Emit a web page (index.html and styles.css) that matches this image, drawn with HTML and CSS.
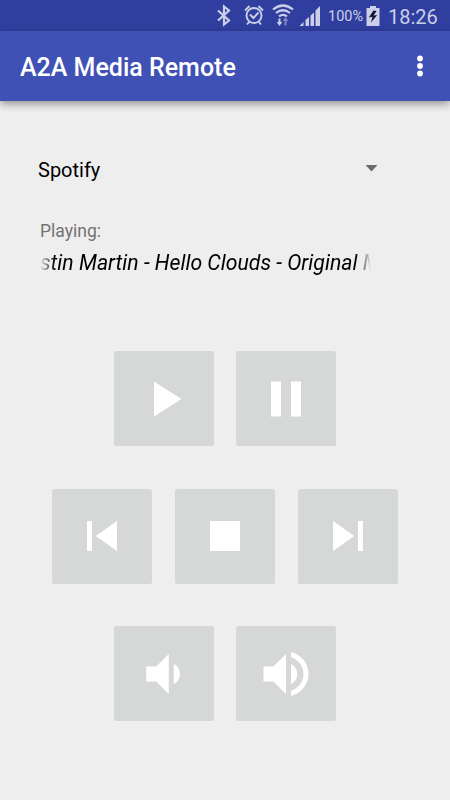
FILE: index.html
```html
<!DOCTYPE html>
<html lang="en">
<head>
<meta charset="utf-8">
<title>A2A Media Remote</title>
<link rel="stylesheet" href="styles.css">
</head>
<body>
<div class="status">
  <svg class="status-icons" width="108" height="30" viewBox="0 0 108 30">
    <path class="line bold" d="M1 10.500L12 20.500L7 24.500V6.500L12 10.500L1 20.500"/>
    <g class="line">
      <circle cx="37" cy="15.500" r="7.500"/>
      <path d="M33 14.500l3.500 3.500 5-5.500M28 10.500l4.500-4.500M46 10.500l-4.500-4.500M32.500 21.500l-2.500 3M41.500 21.500l2.500 3"/>
    </g>
    <g class="line bold">
      <path d="M56 9.500Q66 1.500 76 9.500M59 13Q66 7.500 73 13M62 16.300Q66 13.300 70 16.300"/>
    </g>
    <path class="fill" d="M61.500 18.500h2v3.500h1.800l-2.800 4-2.800-4h1.800z"/>
    <path class="dim" d="M67.500 25.500h2V21h1.800l-2.800-4-2.800 4h1.800z"/>
    <path class="fill" d="M82.500 26l4-4V26zM88.500 20l3.500-3v9h-3.500zM93.500 15.500l3.500-3V26h-3.500zM98.500 10.500l4.500-4.500V26h-4.500z"/>
  </svg>
  <span class="percent">100%</span>
  <svg class="battery" width="14" height="20" viewBox="0 0 14 20">
    <path class="fill" d="M.500 2H4V0h6v2h3.500v18H.500z"/>
    <path class="bolt" d="M7.500 4.500L2.800 11.500 6.500 10.800 5 16.500 11.200 9 7.500 9.500 10.500 5z"/>
  </svg>
  <span class="clock">18:26</span>
</div>
<header class="appbar">
  <h1 class="title">A2A Media Remote</h1>
  <svg class="more" width="8" height="22" viewBox="0 0 8 22">
    <circle cx="4" cy="3.500" r="2.900"/><circle cx="4" cy="11" r="2.900"/><circle cx="4" cy="18.500" r="2.900"/>
  </svg>
</header>
<main>
  <div class="spinner">
    <span class="choice">Spotify</span>
    <svg class="caret" width="13" height="7" viewBox="0 0 13 7"><path d="M.500 0h12l-6 6.500z"/></svg>
  </div>
  <div class="label">Playing:</div>
  <div class="marquee"><span class="track">stin Martin - Hello Clouds - Original Mix</span></div>
  <div class="controls">
    <div class="row">
      <button class="key" aria-label="Play"><svg viewBox="0 0 24 24"><path d="M8 5v14l11-7z"/></svg></button>
      <button class="key" aria-label="Pause"><svg viewBox="0 0 24 24"><path d="M6 19h4V5H6zM14 5v14h4V5z"/></svg></button>
    </div>
    <div class="row">
      <button class="key" aria-label="Previous"><svg viewBox="0 0 24 24"><path d="M6 6h2v12H6zM9.500 12l8.500 6V6z"/></svg></button>
      <button class="key" aria-label="Stop"><svg viewBox="0 0 24 24"><path d="M6 6h12v12H6z"/></svg></button>
      <button class="key" aria-label="Next"><svg viewBox="0 0 24 24"><path d="M6 18l8.500-6L6 6zM16 6v12h2V6z"/></svg></button>
    </div>
    <div class="row">
      <button class="key" aria-label="Volume down"><svg viewBox="0 0 24 24"><path d="M18.500 12c0-1.770-1.020-3.290-2.500-4.030v8.050c1.480-.730 2.500-2.250 2.500-4.020zM5 9v6h4l5 5V4L9 9z" transform="translate(-.1 0)"/></svg></button>
      <button class="key" aria-label="Volume up"><svg viewBox="0 0 24 24"><path d="M3 9v6h4l5 5V4L7 9zM16.500 12c0-1.770-1.020-3.290-2.500-4.030v8.050c1.480-.730 2.500-2.250 2.500-4.020zM14 3.230v2.060c2.890.860 5 3.540 5 6.710s-2.110 5.850-5 6.710v2.060c4.010-.910 7-4.490 7-8.770s-2.990-7.860-7-8.770z"/></svg></button>
    </div>
  </div>
</main>
</body>
</html>
```

FILE: styles.css
```css
* { box-sizing: border-box; }
body {
  margin: 0;
  height: 800px;
  overflow: hidden;
  background: #eeeeee;
  color: #000;
  font-family: Roboto, sans-serif;
}
.status {
  display: flex;
  height: 31px;
  padding-left: 217px;
  background: #303f9f;
  color: #cbcfe8;
  white-space: nowrap;
}
.status-icons { flex: none; }
.line { fill: none; stroke: #cbcfe8; stroke-width: 1.9; }
.bold { stroke-width: 2.2; }
.fill { fill: #cbcfe8; }
.dim { fill: #7d86c2; }
.percent {
  width: 41px;
  padding-left: 3px;
  font-size: 14.500px;
  line-height: 33px;
}
.battery { flex: none; margin-top: 6px; }
.bolt { fill: #10142e; }
.clock {
  margin-left: 8px;
  font-size: 20px;
  line-height: 34px;
}
.appbar {
  position: relative;
  display: flex;
  justify-content: space-between;
  height: 70px;
  padding: 22px 26px 0 20px;
  background: #3f51b5;
  box-shadow: 0 3px 8px rgba(0, 0, 0, .38);
}
.title {
  margin: 0;
  color: #fff;
  font-size: 25px;
  font-weight: 500;
  line-height: 30px;
}
.more { margin-top: 2px; fill: #fff; }
.spinner {
  display: flex;
  align-items: flex-start;
  justify-content: space-between;
  width: 378px;
  height: 30px;
  margin-top: 53px;
  padding-left: 38px;
}
.choice { font-size: 20px; line-height: 32px; }
.caret { margin-top: 11px; fill: #6b6b6b; }
.label {
  margin: 35px 0 0 40px;
  color: #737373;
  font-size: 17.500px;
  line-height: 24px;
}
.marquee {
  width: 331px;
  height: 32px;
  margin: 4px 0 0 40px;
  overflow: hidden;
  font-size: 21.230px;
  font-style: italic;
  line-height: 32px;
  white-space: nowrap;
  mask-image: linear-gradient(to right, transparent, #000 15px, #000 316px, transparent);
}
.controls {
  display: flex;
  flex-direction: column;
  gap: 42.500px;
  margin-top: 72.200px;
}
.row {
  display: flex;
  justify-content: center;
  gap: 22.600px;
}
.key {
  display: flex;
  align-items: center;
  justify-content: center;
  width: 100px;
  height: 95px;
  padding: 0;
  border: 0;
  border-radius: 2.500px;
  background: #d6d8d7;
}
.key svg { width: 60px; height: 60px; fill: #fff; }
```
